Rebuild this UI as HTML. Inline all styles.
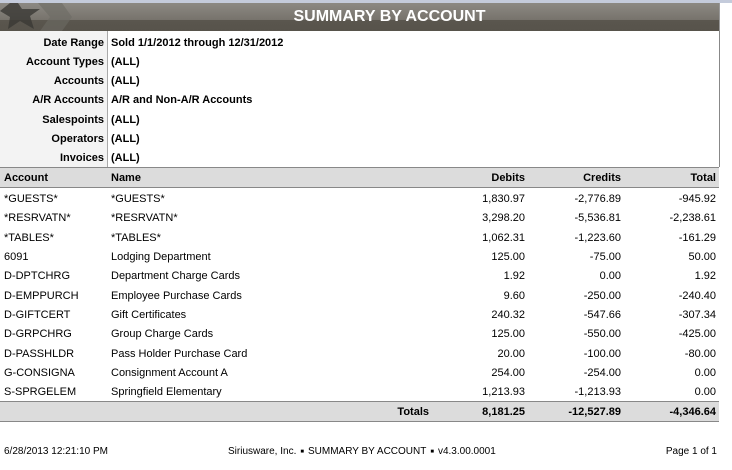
<!DOCTYPE html>
<html><head><style>
body{margin:0;width:732px;height:470px;background:#fff;font-family:"Liberation Sans",Arial,sans-serif;font-size:11px;color:#000;position:relative;overflow:hidden}
.top{position:absolute;left:0;top:0;width:732px;height:3px;background:#c4cbdb}
.hdr{position:absolute;left:0;top:3px;width:719px;height:28px;background:linear-gradient(#8c8983,#77736c 60%,#5a564e 60%,#57534b);border-right:1px solid #999}
.hdr .t{position:absolute;left:0;right:0;top:5px;text-align:center;color:#fff;font-weight:bold;font-size:16px;padding-left:60px}
.filt{position:absolute;left:0;top:31px;width:719px;height:136px;border-right:1px solid #888}
.lab{position:absolute;left:0;top:0;width:107px;height:136px;background:#f3f3f3;border-right:1px solid #aaa}
.r{position:absolute;font-weight:bold;height:19px;line-height:19px}
.l{right:0;width:104px;text-align:right}
.row{position:absolute;left:0;width:719px;height:19px;line-height:19px}
.row span{position:absolute}
.a{left:4px}.n{left:111px}.d{right:194px}.c{right:98px}.tt{right:3px}
.th{background:#dcdcdc;border-top:1px solid #888;border-bottom:1px solid #888;font-weight:bold;height:19px;line-height:21px}
.foot{position:absolute;top:446px;font-size:10px}
.b{font-size:6px;vertical-align:1px;margin:0 4px}
</style></head><body>
<div class="top"></div>
<div class="hdr">
<svg width="75" height="28" style="position:absolute;left:0;top:0"><polygon points="10,0 18,0 22,6 40,6 30,13 34,26 20,18 8,26 10,14 0,8" fill="#3a3835" opacity=".8"/><polygon points="38,0 62,0 72,14 62,28 40,28 50,14" fill="#6d6a64" opacity=".6"/></svg>
<div class="t">SUMMARY BY ACCOUNT</div></div>
<div class="filt"><div class="lab"></div>
<div class="r l" style="top:3px;right:615px">Date Range</div><div class="r" style="top:3px;left:111px">Sold 1/1/2012 through 12/31/2012</div>
<div class="r l" style="top:22px;right:615px">Account Types</div><div class="r" style="top:22px;left:111px">(ALL)</div>
<div class="r l" style="top:41px;right:615px">Accounts</div><div class="r" style="top:41px;left:111px">(ALL)</div>
<div class="r l" style="top:60px;right:615px">A/R Accounts</div><div class="r" style="top:60px;left:111px">A/R and Non-A/R Accounts</div>
<div class="r l" style="top:80px;right:615px">Salespoints</div><div class="r" style="top:80px;left:111px">(ALL)</div>
<div class="r l" style="top:99px;right:615px">Operators</div><div class="r" style="top:99px;left:111px">(ALL)</div>
<div class="r l" style="top:118px;right:615px">Invoices</div><div class="r" style="top:118px;left:111px">(ALL)</div>
</div>
<div class="row th" style="top:167px"><span class="a">Account</span><span class="n">Name</span><span class="d">Debits</span><span class="c">Credits</span><span class="tt">Total</span></div>
<div class="row" style="top:190px"><span class="a">*GUESTS*</span><span class="n">*GUESTS*</span><span class="d">1,830.97</span><span class="c">-2,776.89</span><span class="tt">-945.92</span></div>
<div class="row" style="top:209px"><span class="a">*RESRVATN*</span><span class="n">*RESRVATN*</span><span class="d">3,298.20</span><span class="c">-5,536.81</span><span class="tt">-2,238.61</span></div>
<div class="row" style="top:229px"><span class="a">*TABLES*</span><span class="n">*TABLES*</span><span class="d">1,062.31</span><span class="c">-1,223.60</span><span class="tt">-161.29</span></div>
<div class="row" style="top:248px"><span class="a">6091</span><span class="n">Lodging Department</span><span class="d">125.00</span><span class="c">-75.00</span><span class="tt">50.00</span></div>
<div class="row" style="top:267px"><span class="a">D-DPTCHRG</span><span class="n">Department Charge Cards</span><span class="d">1.92</span><span class="c">0.00</span><span class="tt">1.92</span></div>
<div class="row" style="top:287px"><span class="a">D-EMPPURCH</span><span class="n">Employee Purchase Cards</span><span class="d">9.60</span><span class="c">-250.00</span><span class="tt">-240.40</span></div>
<div class="row" style="top:306px"><span class="a">D-GIFTCERT</span><span class="n">Gift Certificates</span><span class="d">240.32</span><span class="c">-547.66</span><span class="tt">-307.34</span></div>
<div class="row" style="top:325px"><span class="a">D-GRPCHRG</span><span class="n">Group Charge Cards</span><span class="d">125.00</span><span class="c">-550.00</span><span class="tt">-425.00</span></div>
<div class="row" style="top:345px"><span class="a">D-PASSHLDR</span><span class="n">Pass Holder Purchase Card</span><span class="d">20.00</span><span class="c">-100.00</span><span class="tt">-80.00</span></div>
<div class="row" style="top:364px"><span class="a">G-CONSIGNA</span><span class="n">Consignment Account A</span><span class="d">254.00</span><span class="c">-254.00</span><span class="tt">0.00</span></div>
<div class="row" style="top:383px"><span class="a">S-SPRGELEM</span><span class="n">Springfield Elementary</span><span class="d">1,213.93</span><span class="c">-1,213.93</span><span class="tt">0.00</span></div>
<div class="row th" style="top:401px"><span style="right:290px">Totals</span><span class="d">8,181.25</span><span class="c">-12,527.89</span><span class="tt">-4,346.64</span></div>
<div class="foot" style="left:4px">6/28/2013 12:21:10 PM</div>
<div class="foot" style="left:228px">Siriusware, Inc.<span class="b">&#9632;</span>SUMMARY BY ACCOUNT<span class="b">&#9632;</span>v4.3.00.0001</div>
<div class="foot" style="right:15px">Page 1 of 1</div>
</body></html>
